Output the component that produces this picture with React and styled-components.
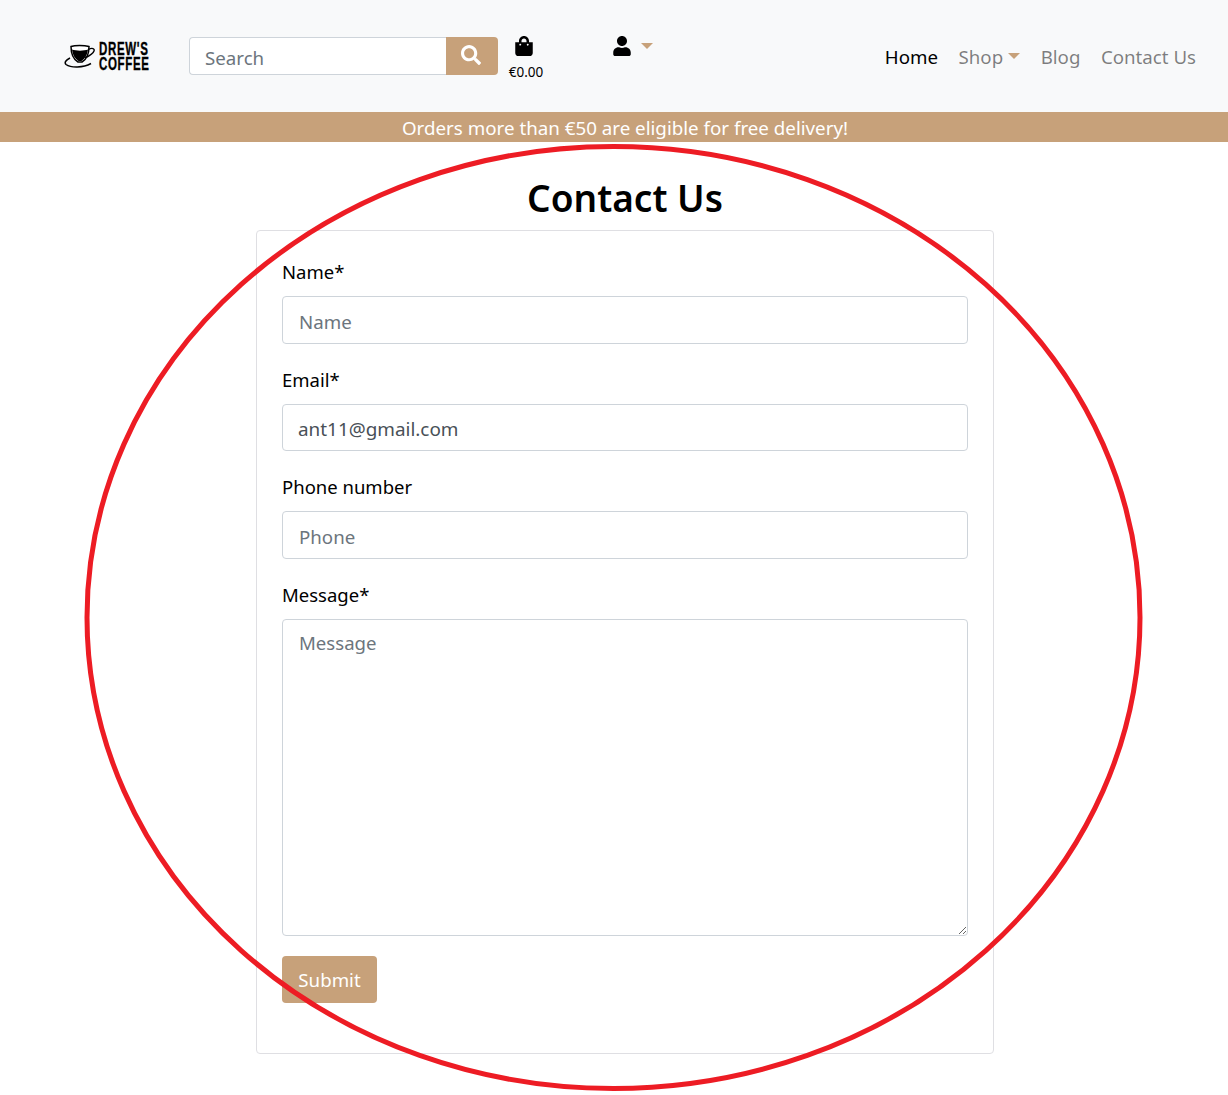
import React from 'react';
import styled, { createGlobalStyle } from 'styled-components';
import { FaSearch, FaShoppingBag, FaUser } from 'react-icons/fa';

const tan = '#c7a17a';

const GlobalStyle = createGlobalStyle`
	html, body {
		margin: 0;
		padding: 0;
		background: #fff;
		font-family: 'Noto Sans', 'Open Sans', sans-serif;
		color: #000;
		overflow-x: hidden;
	}
	#root {
		position: relative;
		height: 1095px;
		overflow: hidden;
	}
`;

const Navbar = styled.nav`
	height: 112px;
	background: #f8f9fa;
	display: flex;
	align-items: flex-start;
	padding-left: 64px;
	padding-right: 32px;
	box-sizing: border-box;
`;

const Logo = styled.div`
	width: 85px;
	height: 32px;
	margin-top: 41px;
	display: flex;
	align-items: center;
	gap: 4px;
`;

const LogoText = styled.div`
	font-family: 'Liberation Sans', sans-serif;
	font-weight: 700;
	font-size: 18px;
	line-height: 15px;
	letter-spacing: 1px;
	width: 50px;
	flex: none;
	white-space: nowrap;
	transform: scaleX(0.64);
	transform-origin: left center;
	-webkit-text-stroke: 0.35px #000;
`;

const SearchForm = styled.form`
	display: flex;
	width: 309px;
	height: 38px;
	margin-top: 37px;
	margin-left: 40px;
`;

const SearchInput = styled.input`
	flex: 1;
	min-width: 0;
	box-sizing: border-box;
	border: 1px solid #ced4da;
	border-right: none;
	border-radius: 4px 0 0 4px;
	padding: 3px 15px 0;
	font: inherit;
	font-size: 18.7px;
	outline: none;
	color: #495057;

	&::placeholder {
		color: #6c757d;
		opacity: 1;
	}
`;

const SearchButton = styled.button`
	width: 52px;
	border: none;
	border-radius: 0 4px 4px 0;
	background: ${tan};
	color: #fff;
	display: flex;
	align-items: center;
	justify-content: center;
	font-size: 20px;
	padding: 0 2px 2px 0;
`;

const Cart = styled.div`
	width: 36px;
	margin-left: 10px;
	margin-top: 36px;
	display: flex;
	flex-direction: column;
	align-items: center;
	font-size: 13.5px;
	line-height: 18px;
`;

const CartIcon = styled.div`
	font-size: 20px;
	height: 27px;
	padding-right: 5px;
	display: flex;
	color: #000;
`;

const Account = styled.div`
	margin-left: 68px;
	margin-top: 36px;
	display: flex;
	align-items: flex-start;
	font-size: 20px;
`;

const Caret = styled.span`
	display: inline-block;
	width: 0;
	height: 0;
	border-left: 6px solid transparent;
	border-right: 6px solid transparent;
	border-top: 6px solid ${tan};
	margin-left: ${(p) => p.$gap}px;
	margin-top: ${(p) => p.$top}px;
`;

const NavLinks = styled.ul`
	list-style: none;
	margin: 0 0 0 auto;
	padding: 0;
	display: flex;
	gap: 20.5px;
	margin-top: 43px;
	font-size: 18.7px;
	line-height: 27px;
`;

const NavItem = styled.li`
	color: ${(p) => (p.$active ? '#000' : 'rgba(0, 0, 0, 0.5)')};
	display: flex;
	align-items: flex-start;
	white-space: nowrap;
`;

const Banner = styled.div`
	height: 30px;
	background: ${tan};
	color: #fff;
	text-align: center;
	font-size: 18.75px;
	line-height: 32px;
	padding-left: 22px;
	white-space: nowrap;
`;

const Main = styled.main`
	width: 738px;
	margin-left: 256px;
`;

const Title = styled.h1`
	margin: 0;
	height: 88px;
	box-sizing: border-box;
	padding-top: 30px;
	text-align: center;
	font-size: 37px;
	line-height: 52px;
	font-weight: 600;
`;

const Card = styled.form`
	height: 824px;
	box-sizing: border-box;
	border: 1px solid #dfdfe3;
	border-radius: 4px;
	padding: 25px;
	display: flex;
	flex-direction: column;
`;

const Field = styled.div`
	display: flex;
	flex-direction: column;
	gap: 8px;
	margin-bottom: 20px;
`;

const Label = styled.label`
	font-size: 18.5px;
	line-height: 32px;
	height: 32px;
`;

const Input = styled.input`
	height: ${(p) => (p.$short ? 47 : 48)}px;
	box-sizing: border-box;
	border: 1px solid #ced4da;
	border-radius: 4px;
	padding: ${(p) => (p.$short ? 2 : 3)}px 15px 0 ${(p) => (p.$short ? 15 : 16)}px;
	font: inherit;
	font-size: ${(p) => (p.$short ? 18.9 : 18.7)}px;
	color: #495057;
	outline: none;

	&::placeholder {
		color: #6c757d;
		opacity: 1;
	}
`;

const TextArea = styled.textarea`
	height: 317px;
	box-sizing: border-box;
	border: 1px solid #ced4da;
	border-radius: 4px;
	padding: 8px 16px;
	font: inherit;
	font-size: 18.6px;
	line-height: 30px;
	outline: none;
	resize: vertical;

	&::placeholder {
		color: #6c757d;
		opacity: 1;
	}
`;

const SubmitButton = styled.button`
	align-self: flex-start;
	width: 95px;
	height: 47px;
	border: none;
	border-radius: 4px;
	background: ${tan};
	color: #fff;
	font: inherit;
	font-size: 18.7px;
	padding: 0;
`;

const Annotation = styled.svg`
	position: absolute;
	left: 0;
	top: 0;
	pointer-events: none;
`;

const CupIcon = styled.svg`
	flex: none;
`;

const CoffeeCup = () => (
	<CupIcon width="31" height="26" viewBox="0 0 31 26" fill="none" stroke="#000">
		<path d="M7 2.5 C11 1 20 1 25 2.5 C25 10 23 15 18 18 L14 18 C9 15 7 10 7 2.5 Z" strokeWidth="1.5" fill="#fff" />
		<path d="M8 5.5 C12 7 20 7 24 5.5 C23.5 10.5 21.5 14.5 17.5 17 L14.5 17 C10.5 14.5 8.5 10.5 8 5.5 Z" fill="#000" stroke="none" />
		<path d="M24.5 5.5 C28 3.5 31 4.5 30 7 C29 10 25 12 21 14" strokeWidth="1.4" />
		<path d="M6 14 C2 16 0 18.5 2 20.5 C7 24 19 24 27 19.5" strokeWidth="1.5" />
	</CupIcon>
);

export default function App() {
	return (
		<>
			<GlobalStyle />
			<Navbar>
				<Logo>
					<CoffeeCup />
					<LogoText>DREW'S<br />COFFEE</LogoText>
				</Logo>
				<SearchForm>
					<SearchInput placeholder="Search" />
					<SearchButton type="button"><FaSearch /></SearchButton>
				</SearchForm>
				<Cart>
					<CartIcon><FaShoppingBag /></CartIcon>
					<span>€0.00</span>
				</Cart>
				<Account>
					<FaUser />
					<Caret $gap={9} $top={7} />
				</Account>
				<NavLinks>
					<NavItem $active>Home</NavItem>
					<NavItem>Shop<Caret $gap={5} $top={10} /></NavItem>
					<NavItem>Blog</NavItem>
					<NavItem>Contact Us</NavItem>
				</NavLinks>
			</Navbar>
			<Banner>Orders more than €50 are eligible for free delivery!</Banner>
			<Main>
				<Title>Contact Us</Title>
				<Card>
					<Field>
						<Label>Name*</Label>
						<Input placeholder="Name" />
					</Field>
					<Field>
						<Label>Email*</Label>
						<Input $short defaultValue="ant11@gmail.com" />
					</Field>
					<Field>
						<Label>Phone number</Label>
						<Input placeholder="Phone" />
					</Field>
					<Field>
						<Label>Message*</Label>
						<TextArea placeholder="Message" />
					</Field>
					<SubmitButton type="button">Submit</SubmitButton>
				</Card>
			</Main>
			<Annotation width="1228" height="1095">
				<ellipse cx="613.5" cy="617.5" rx="526.5" ry="471" fill="none" stroke="#ed1c24" strokeWidth="5" />
			</Annotation>
		</>
	);
}
